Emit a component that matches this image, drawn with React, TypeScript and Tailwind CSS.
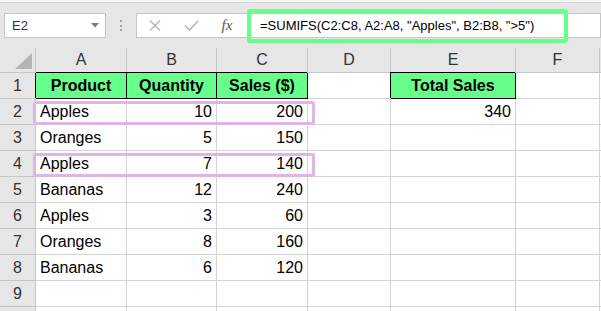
import React from 'react';

const COLS = ['A', 'B', 'C', 'D', 'E', 'F'];

// each row: [A, B, C, D, E, F]
const ROWS: string[][] = [
  ['Product', 'Quantity', 'Sales ($)', '', 'Total Sales', ''],
  ['Apples', '10', '200', '', '340', ''],
  ['Oranges', '5', '150', '', '', ''],
  ['Apples', '7', '140', '', '', ''],
  ['Bananas', '12', '240', '', '', ''],
  ['Apples', '3', '60', '', '', ''],
  ['Oranges', '8', '160', '', '', ''],
  ['Bananas', '6', '120', '', '', ''],
  ['', '', '', '', '', ''],
  ['', '', '', '', '', ''],
];

const GREEN = new Set(['1-0', '1-1', '1-2', '1-4']);

function Cell({ value, row, col }: { value: string; row: number; col: number }) {
  const green = GREEN.has(`${row}-${col}`);
  const numeric = value !== '' && !isNaN(Number(value));
  if (green) {
    return (
      <div className="h-[26px] flex items-center justify-center border-r border-b border-black bg-[#66ff8c] shadow-[-1px_-1px_0_0_#000] font-bold text-[16px] text-black">
        {value}
      </div>
    );
  }
  return (
    <div
      className={`h-[26px] flex items-center border-r border-b border-[#d4d4d4] text-[16px] text-black ${
        numeric ? 'justify-end pr-[4px]' : 'pl-[4px]'
      }`}
    >
      {value}
    </div>
  );
}

export default function App() {
  return (
    <div className="relative w-[601px] h-[311px] overflow-hidden bg-white font-['Liberation_Sans',Arial,sans-serif]">
      {/* Toolbar / formula bar */}
      <div className="h-[48px] bg-[#e6e6e6]">
        <div className="h-[3px] bg-[#f3f3f3] border-b border-[#d6d6d6]" />
        <div className="flex items-start pt-[10px]">
          {/* Name box */}
          <div className="ml-[4px] w-[102px] h-[25px] bg-white border border-[#c6c6c6] flex items-center justify-between pl-[7px] pr-[6px]">
            <span className="text-[13px] text-[#333]">E2</span>
            <svg width="8" height="5" viewBox="0 0 8 5">
              <polygon points="0,0 8,0 4,4.5" fill="#7a7a7a" />
            </svg>
          </div>
          {/* Grip dots */}
          <div className="w-[30px] h-[25px] flex flex-col items-center justify-center gap-[2.5px]">
            <div className="w-[2px] h-[2px] bg-[#a6a6a6]" />
            <div className="w-[2px] h-[2px] bg-[#a6a6a6]" />
            <div className="w-[2px] h-[2px] bg-[#a6a6a6]" />
          </div>
          {/* Formula bar */}
          <div className="w-[465px] h-[25px] bg-white border border-[#c6c6c6] flex items-center">
            <div className="w-[36px] flex justify-center">
              <svg width="12" height="11" viewBox="0 0 12 11">
                <path d="M1 0.5 L11 10.5 M11 0.5 L1 10.5" stroke="#b4b4b4" strokeWidth="1.4" fill="none" />
              </svg>
            </div>
            <div className="w-[36px] flex justify-center">
              <svg width="15" height="11" viewBox="0 0 15 11">
                <path d="M1 5.5 L5.5 10 L14 1" stroke="#b4b4b4" strokeWidth="1.6" fill="none" />
              </svg>
            </div>
            <div className="w-[36px] flex justify-center">
              <span className="font-['Liberation_Serif',serif] italic text-[15px] text-[#555] leading-none">fx</span>
            </div>
            <span className="pl-[15px] text-[13px] text-black whitespace-nowrap">
              =SUMIFS(C2:C8, A2:A8, "Apples", B2:B8, "&gt;5")
            </span>
          </div>
        </div>
      </div>

      {/* Sheet grid */}
      <div className="grid grid-cols-[36px_91px_90px_91px_83px_125px_84px_1fr]">
        {/* Column header row */}
        <div className="relative h-[25px] bg-[#e6e6e6] border-r border-b border-[#c6c6c6]">
          <svg className="absolute left-[15px] top-[5px]" width="17" height="16" viewBox="0 0 17 16">
            <polygon points="17,0 17,16 0,16" fill="#b4b4b4" />
          </svg>
        </div>
        {COLS.map((c) => (
          <div
            key={c}
            className="h-[25px] flex items-center justify-center bg-[#e6e6e6] border-r border-b border-[#c6c6c6] text-[16px] text-[#333]"
          >
            {c}
          </div>
        ))}
        <div className="h-[25px] bg-[#e6e6e6] border-b border-[#c6c6c6]" />

        {ROWS.map((row, r) => (
          <React.Fragment key={r}>
            <div className="h-[26px] flex items-center justify-center bg-[#e6e6e6] border-r border-b border-[#c6c6c6] text-[16px] text-[#333]">
              {r < 9 ? r + 1 : ''}
            </div>
            {row.map((v, c) => (
              <Cell key={c} value={v} row={r + 1} col={c} />
            ))}
            <div className="h-[26px] border-b border-[#d4d4d4]" />
          </React.Fragment>
        ))}
      </div>

      {/* Annotations */}
      <div className="absolute left-[247px] top-[9px] w-[321px] h-[34px] border-4 border-[#66ff8c] rounded-[3px]" />
      <div className="absolute left-[33px] top-[101px] w-[282px] h-[24px] border-[3px] border-[#e1b4e8] rounded-[3px]" />
      <div className="absolute left-[33px] top-[153px] w-[282px] h-[24px] border-[3px] border-[#e1b4e8] rounded-[3px]" />
    </div>
  );
}
